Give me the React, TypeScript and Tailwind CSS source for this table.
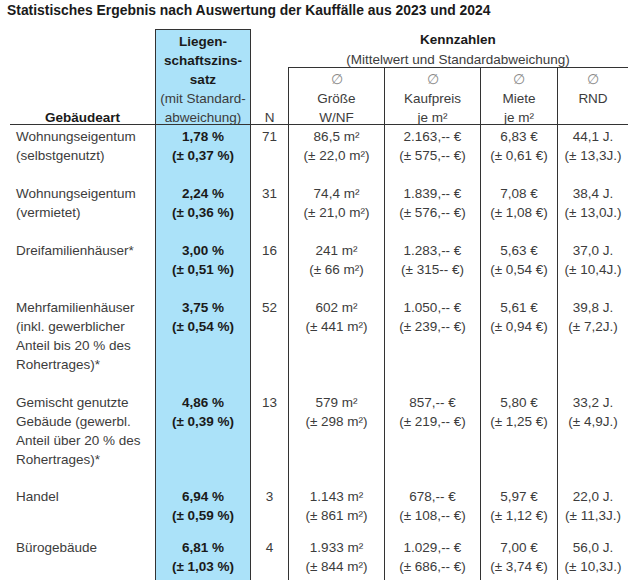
type Row = {
  name: string[];
  zins: string[];
  n: string;
  groesse: string[];
  kauf: string[];
  miete: string[];
  rnd: string[];
  h: string;
};

const rows: Row[] = [
  {
    name: ["Wohnungseigentum", "(selbstgenutzt)"],
    zins: ["1,78 %", "(± 0,37 %)"],
    n: "71",
    groesse: ["86,5 m²", "(± 22,0 m²)"],
    kauf: ["2.163,-- €", "(± 575,-- €)"],
    miete: ["6,83 €", "(± 0,61 €)"],
    rnd: ["44,1 J.", "(± 13,3J.)"],
    h: "h-[57px]",
  },
  {
    name: ["Wohnungseigentum", "(vermietet)"],
    zins: ["2,24 %", "(± 0,36 %)"],
    n: "31",
    groesse: ["74,4 m²", "(± 21,0 m²)"],
    kauf: ["1.839,-- €", "(± 576,-- €)"],
    miete: ["7,08 €", "(± 1,08 €)"],
    rnd: ["38,4 J.", "(± 13,0J.)"],
    h: "h-[57px]",
  },
  {
    name: ["Dreifamilienhäuser*"],
    zins: ["3,00 %", "(± 0,51 %)"],
    n: "16",
    groesse: ["241 m²", "(± 66 m²)"],
    kauf: ["1.283,-- €", "(± 315-- €)"],
    miete: ["5,63 €", "(± 0,54 €)"],
    rnd: ["37,0 J.", "(± 10,4J.)"],
    h: "h-[57px]",
  },
  {
    name: [
      "Mehrfamilienhäuser",
      "(inkl. gewerblicher",
      "Anteil bis 20 % des",
      "Rohertrages)*",
    ],
    zins: ["3,75 %", "(± 0,54 %)"],
    n: "52",
    groesse: ["602 m²", "(± 441 m²)"],
    kauf: ["1.050,-- €", "(± 239,-- €)"],
    miete: ["5,61 €", "(± 0,94 €)"],
    rnd: ["39,8 J.", "(± 7,2J.)"],
    h: "h-[95px]",
  },
  {
    name: [
      "Gemischt genutzte",
      "Gebäude (gewerbl.",
      "Anteil über 20 % des",
      "Rohertrages)*",
    ],
    zins: ["4,86 %", "(± 0,39 %)"],
    n: "13",
    groesse: ["579 m²", "(± 298 m²)"],
    kauf: ["857,-- €", "(± 219,-- €)"],
    miete: ["5,80 €", "(± 1,25 €)"],
    rnd: ["33,2 J.", "(± 4,9J.)"],
    h: "h-[94px]",
  },
  {
    name: ["Handel"],
    zins: ["6,94 %", "(± 0,59 %)"],
    n: "3",
    groesse: ["1.143 m²", "(± 861 m²)"],
    kauf: ["678,-- €", "(± 108,-- €)"],
    miete: ["5,97 €", "(± 1,12 €)"],
    rnd: ["22,0 J.", "(± 11,3J.)"],
    h: "h-[51px]",
  },
  {
    name: ["Bürogebäude"],
    zins: ["6,81 %", "(± 1,03 %)"],
    n: "4",
    groesse: ["1.933 m²", "(± 844 m²)"],
    kauf: ["1.029,-- €", "(± 686,-- €)"],
    miete: ["7,00 €", "(± 3,74 €)"],
    rnd: ["56,0 J.", "(± 10,3J.)"],
    h: "h-[60px]",
  },
];

function Lines({ items }: { items: string[] }) {
  return (
    <>
      {items.map((t, i) => (
        <div key={i} className="whitespace-nowrap">
          {t}
        </div>
      ))}
    </>
  );
}

export default function App() {
  return (
    <div className="w-[628px] h-[580px] overflow-hidden bg-white pl-[7px] font-['Liberation_Sans',Arial,sans-serif] text-[13.5px] leading-[19px] text-[#3c3c3c]">
      {/* title */}
      <div className="h-[29px] pt-[1px] text-[13.9px] font-bold text-[#1a1a1a] whitespace-nowrap">
        Statistisches Ergebnis nach Auswertung der Kauffälle aus 2023 und 2024
      </div>

      <div className="ml-[3px] w-[618px]">
        {/* header */}
        <div className="flex h-[96px] border-b border-[#333]">
          <div className="w-[145px] flex flex-col justify-end items-center">
            <div className="-mb-[3px] font-bold text-[#1a1a1a]">Gebäudeart</div>
          </div>
          <div className="w-[96px] bg-[#abe2f9] border-x border-t border-[#333] pt-[2px] text-center">
            <div className="font-bold text-[#1a1a1a]">Liegen-</div>
            <div className="font-bold text-[#1a1a1a]">schaftszins-</div>
            <div className="font-bold text-[#1a1a1a]">satz</div>
            <div>(mit Standard-</div>
            <div>abweichung)</div>
          </div>
          <div className="w-[37px] flex flex-col justify-end items-center">
            <div className="-mb-[3px]">N</div>
          </div>
          <div className="w-[340px] flex flex-col">
            <div className="h-[39px] border-b border-[#333] pt-[1px] text-center leading-[20px]">
              <div className="font-bold text-[#1a1a1a]">Kennzahlen</div>
              <div className="whitespace-nowrap">(Mittelwert und Standardabweichung)</div>
            </div>
            <div className="flex flex-1 text-center">
              <div className="w-[96px] border-l border-[#333] pt-[2px]">
                <div className="text-[#8a8a8a]">∅</div>
                <div>Größe</div>
                <div>W/NF</div>
              </div>
              <div className="w-[96px] border-l border-[#333] pt-[2px]">
                <div className="text-[#8a8a8a]">∅</div>
                <div>Kaufpreis</div>
                <div>je m²</div>
              </div>
              <div className="w-[77px] border-l border-[#333] pt-[2px]">
                <div className="text-[#8a8a8a]">∅</div>
                <div>Miete</div>
                <div>je m²</div>
              </div>
              <div className="w-[71px] border-l border-[#333] pt-[2px]">
                <div className="text-[#8a8a8a]">∅</div>
                <div>RND</div>
              </div>
            </div>
          </div>
        </div>

        {/* body */}
        {rows.map((r, i) => (
          <div key={i} className={`flex ${r.h}`}>
            <div className="w-[145px] pl-[6px] pt-[2px]">
              <Lines items={r.name} />
            </div>
            <div className="w-[96px] bg-[#abe2f9] border-x border-[#333] pt-[2px] text-center font-bold text-[#1a1a1a]">
              <Lines items={r.zins} />
            </div>
            <div className="w-[37px] pt-[2px] text-center">{r.n}</div>
            <div className="w-[96px] border-l border-[#333] pt-[2px] text-center">
              <Lines items={r.groesse} />
            </div>
            <div className="w-[96px] border-l border-[#333] pt-[2px] text-center">
              <Lines items={r.kauf} />
            </div>
            <div className="w-[77px] border-l border-[#333] pt-[2px] text-center">
              <Lines items={r.miete} />
            </div>
            <div className="w-[71px] border-l border-[#333] pt-[2px] text-center">
              <Lines items={r.rnd} />
            </div>
          </div>
        ))}
      </div>
    </div>
  );
}
